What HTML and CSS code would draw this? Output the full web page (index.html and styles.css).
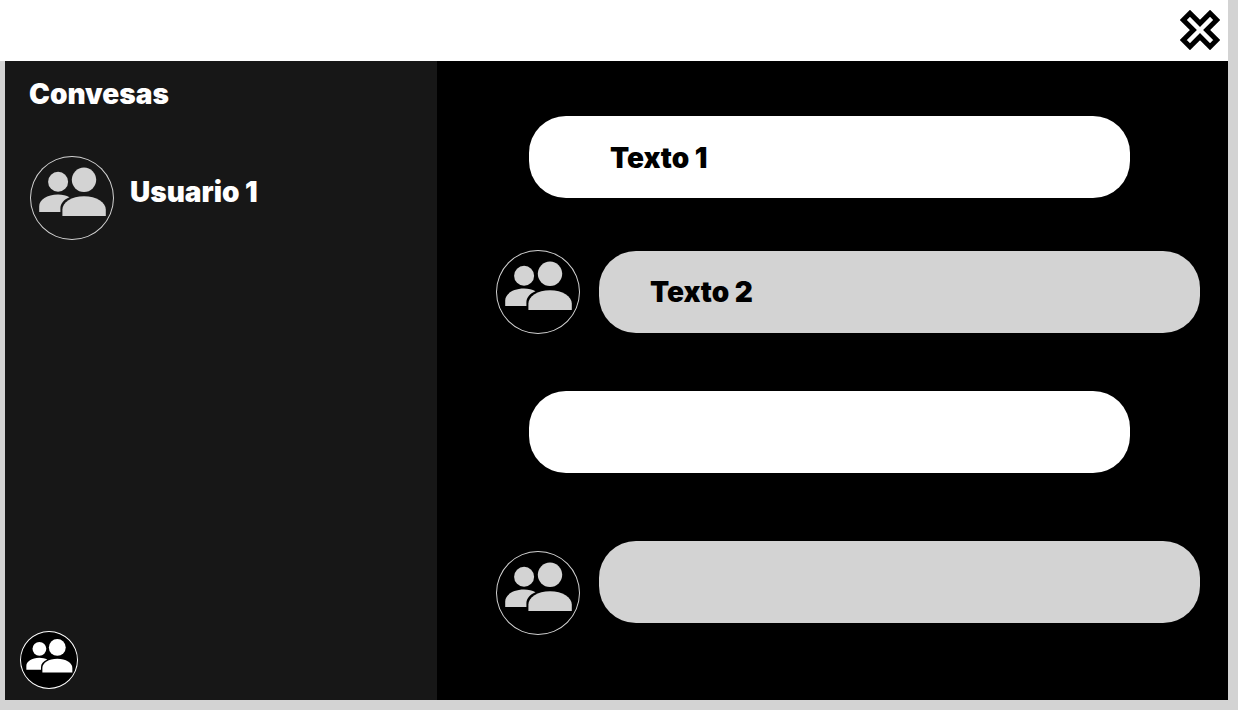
FILE: index.html
```html
<!DOCTYPE html>
<html lang="pt">
<head>
<meta charset="utf-8">
<title>Convesas</title>
<link rel="stylesheet" href="styles.css">
</head>
<body>
<svg class="defs" aria-hidden="true">
  <symbol id="people" viewBox="0 0 84 84">
    <circle cx="28.1" cy="25.8" r="10"/>
    <circle cx="54" cy="23.8" r="12.2"/>
    <path d="M9.2 56V50.5C9.2 44 17 38.6 28 38.6C32.500 38.600 36.300 39.700 39.500 41.300C33.700 43.700 30.400 47.700 30.400 52.500V56Z"/>
    <path d="M32.400 60.100V53.500C32.400 46.500 41.500 40.300 54 40.300S75.800 46.500 75.800 53.500V60.100Z"/>
  </symbol>
</svg>
<header class="topbar">
  <svg class="close" viewBox="-20 -20 40 40" role="img" aria-label="Fechar">
    <path transform="rotate(45)" d="M-4.700-18.900H4.700V-4.700H18.900V4.700H4.700V18.900H-4.700V4.700H-18.900V-4.700H-4.700Z"/>
  </svg>
</header>
<main class="app">
  <aside class="sidebar">
    <h1 class="title">Convesas</h1>
    <div class="contact">
      <div class="avatar"><svg><use href="#people"/></svg></div>
      <span class="name">Usuario 1</span>
    </div>
    <div class="avatar profile"><svg><use href="#people"/></svg></div>
  </aside>
  <section class="chat">
    <div class="bubble sent">Texto 1</div>
    <div class="row">
      <div class="avatar"><svg><use href="#people"/></svg></div>
      <div class="bubble received">Texto 2</div>
    </div>
    <div class="bubble sent"></div>
    <div class="row last">
      <div class="avatar"><svg><use href="#people"/></svg></div>
      <div class="bubble received"></div>
    </div>
  </section>
</main>
</body>
</html>
```
FILE: styles.css
```css
* { box-sizing: border-box; }
body {
  margin: 0;
  height: 710px;
  overflow: hidden;
  background: #d3d3d3;
  font: 900 28px/34px Inter, sans-serif;
}
.defs { display: none; }
.topbar {
  display: flex;
  justify-content: flex-end;
  width: 1228px;
  height: 61px;
  padding: 10px 8px 0 0;
  background: #fff;
}
.close {
  width: 40px;
  height: 40px;
  fill: none;
  stroke: #000;
  stroke-width: 5;
}
.app {
  display: flex;
  width: 1223px;
  height: 639px;
  margin-left: 5px;
  background: #000;
}
.sidebar {
  display: flex;
  flex-direction: column;
  width: 432px;
  padding: 16px 15px 11px;
  background: #171717;
  color: #fff;
}
.title {
  margin: 0 0 45px 9px;
  font: inherit;
}
.contact {
  display: flex;
  gap: 16px;
  margin-left: 10px;
}
.name { margin-top: 19px; }
.avatar {
  flex: none;
  width: 84px;
  height: 84px;
  border-radius: 50%;
  box-shadow: inset 0 0 0 1px #d3d3d3;
  fill: #d3d3d3;
}
.avatar svg {
  display: block;
  width: 100%;
  height: 100%;
}
.profile {
  width: 58px;
  height: 58px;
  margin-top: auto;
  background: #000;
  box-shadow: inset 0 0 0 1px #fff;
  fill: #fff;
}
.chat {
  flex: 1;
  padding: 55px 0 0 59px;
}
.bubble {
  width: 601px;
  height: 82px;
  border-radius: 37px;
  color: #000;
}
.sent {
  margin-left: 33px;
  padding: 25px 81px;
  background: #fff;
}
.row {
  display: flex;
  gap: 19px;
  margin: 52px 0 57px;
}
.received {
  margin-top: 1px;
  padding: 24px 51px;
  background: #d3d3d3;
}
.last { margin: 68px 0 0; }
.last .bubble { margin-top: 0; }
.last .avatar { margin-top: 10px; }
```
